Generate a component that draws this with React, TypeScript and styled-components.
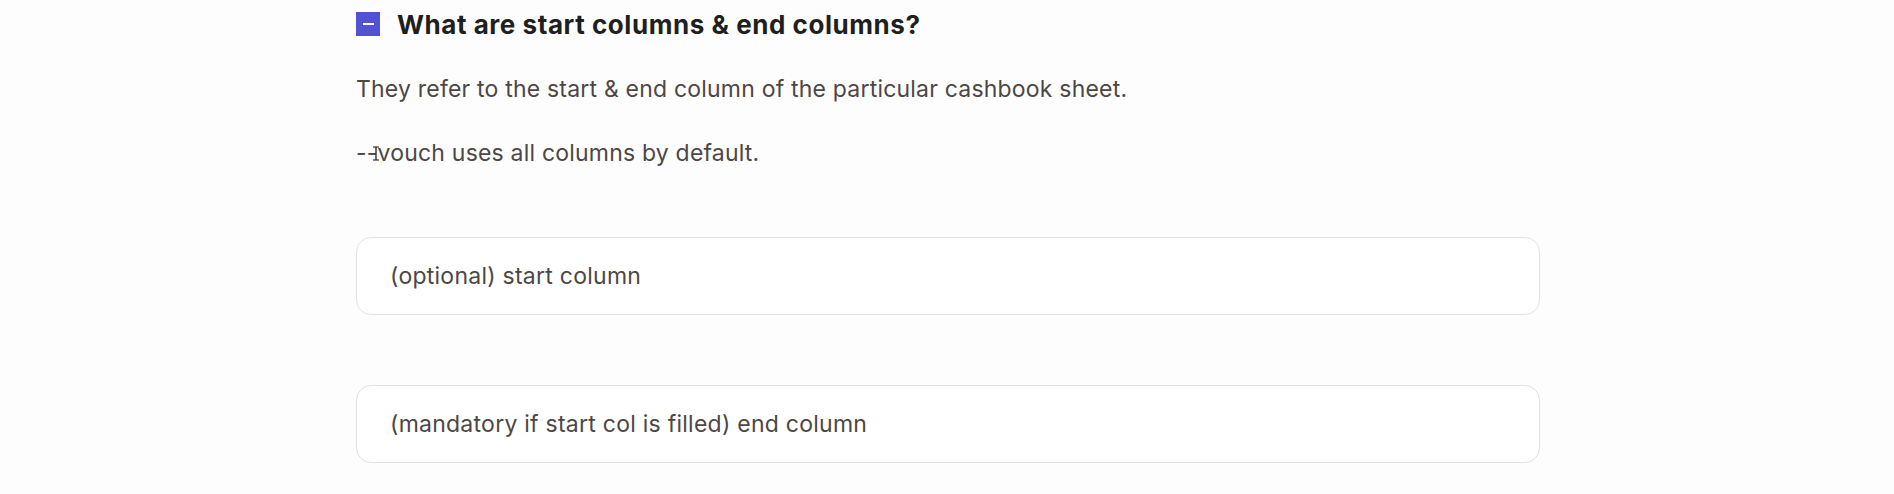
import styled, { createGlobalStyle } from "styled-components";

const GlobalStyle = createGlobalStyle`
  html, body {
    margin: 0;
    padding: 0;
    background-color: #fdfdfd;
  }
`;

const Page = styled.div`
  display: flex;
  justify-content: center;
  padding-left: 2px;
  font-family: Inter, "Liberation Sans", sans-serif;
`;

const Content = styled.div`
  width: 1184px;
  display: flex;
  flex-direction: column;
`;

const QuestionRow = styled.div`
  height: 48px;
  display: flex;
  align-items: center;
  gap: 17px;
`;

const Toggle = styled.button`
  width: 24px;
  height: 24px;
  padding: 0;
  border: none;
  background-color: #5252d4;
  display: flex;
  align-items: center;
  justify-content: center;
  cursor: pointer;

  &::before {
    content: "";
    width: 11px;
    height: 2px;
    background-color: #fff;
  }
`;

const Question = styled.h3`
  margin: 0;
  font-size: 26px;
  font-weight: 700;
  color: #1f1f1f;
  letter-spacing: 0.55px;
`;

const Answer = styled.div`
  margin-top: 27px;
  display: flex;
  flex-direction: column;
  gap: 36px;
`;

const AnswerText = styled.p`
  position: relative;
  margin: 0;
  font-size: 23px;
  line-height: 28px;
  letter-spacing: 0.2px;
  color: #4d4744;
`;

const TextCursor = styled.svg`
  position: absolute;
  left: 16px;
  top: 7px;
`;

const Fields = styled.div`
  margin-top: 70px;
  display: flex;
  flex-direction: column;
  gap: 70px;
`;

const Field = styled.input`
  box-sizing: border-box;
  width: 100%;
  height: 78px;
  padding: 0 33px;
  border: 1px solid #e2e2e2;
  border-radius: 15px;
  background-color: #fff;
  font-family: inherit;
  font-size: 23px;
  letter-spacing: 0.25px;
  color: #4d4744;
  outline: none;

  &::placeholder {
    color: #4d4744;
  }
`;

const App = () => {
  return (
    <>
      <GlobalStyle />
      <Page>
        <Content>
          <QuestionRow>
            <Toggle aria-label="collapse" />
            <Question>What are start columns &amp; end columns?</Question>
          </QuestionRow>
          <Answer>
            <AnswerText>
              They refer to the start &amp; end column of the particular cashbook sheet.
            </AnswerText>
            <AnswerText>
              --vouch uses all columns by default.
              <TextCursor width="8" height="15" viewBox="0 0 8 15">
                <path d="M1 1h6M1 14h6M4 1v13" stroke="#111" strokeWidth="1.2" fill="none" />
              </TextCursor>
            </AnswerText>
          </Answer>
          <Fields>
            <Field placeholder="(optional) start column" />
            <Field placeholder="(mandatory if start col is filled) end column" />
          </Fields>
        </Content>
      </Page>
    </>
  );
};

export default App;
